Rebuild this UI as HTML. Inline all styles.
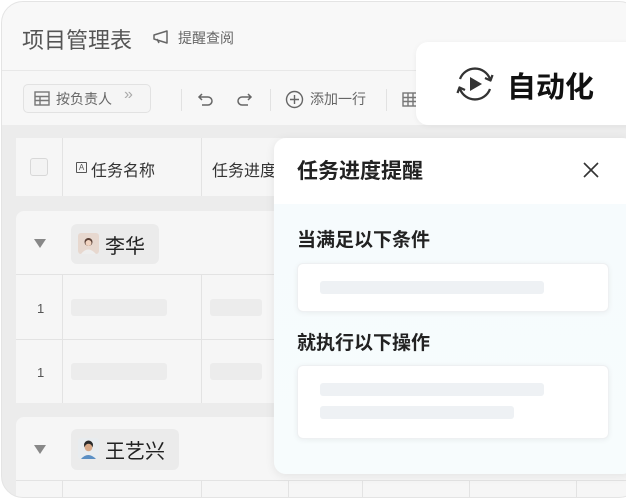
<!DOCTYPE html>
<html><head><meta charset="utf-8"><style>
*{margin:0;padding:0;box-sizing:border-box}
body{width:626px;height:500px;background:#fff;font-family:"Liberation Sans","Noto Sans CJK SC",sans-serif;position:relative;overflow:hidden}
.frame{position:absolute;left:1px;top:1px;width:640px;height:497px;border:1px solid #e4e4e4;border-radius:22px;background:#ececec;overflow:hidden}
.hdr{position:absolute;left:0;top:0;right:0;height:69px;background:#f8f8f8;border-bottom:1px solid #e8e8e8}
.tb{position:absolute;left:0;top:69px;right:0;height:54px;background:#f7f7f7}
.abs{position:absolute}
.t{position:absolute;white-space:nowrap}
.tbl{position:absolute;left:14px;right:0;background:#f6f6f6}
.vl{position:absolute;top:0;bottom:0;width:1px;background:#e3e3e3}
.hl{position:absolute;left:0;right:0;height:1px;background:#e3e3e3}
.sk{position:absolute;height:17px;background:#ececec;border-radius:3px}
.chip{position:absolute;background:#ebebeb;border-radius:6px}
.panel{position:absolute;left:274px;top:138px;width:360px;height:336px;border-radius:12px;background:linear-gradient(#fff 0,#fff 66px,#f6fbfd 66px,#f7fcfd 100%);box-shadow:0 2px 10px rgba(0,0,0,.08)}
.box{position:absolute;left:23px;width:312px;background:#fff;border-radius:6px;box-shadow:0 1px 6px rgba(0,0,0,.06);border:1px solid #eef0f2}
.bar{position:absolute;left:23px;height:13px;background:#eef1f4;border-radius:3px}
.tri{position:absolute;width:0;height:0;border-left:6px solid transparent;border-right:6px solid transparent;border-top:9px solid #888}
</style></head><body>
<div class="frame">
 <div class="hdr">
  <div class="t" style="left:20px;top:21px;font-size:22px;color:#555">项目管理表</div>
  <svg class="abs" style="left:150px;top:27px" width="18" height="16" viewBox="0 0 18 16"><path d="M2 6 L15 2 V14 L2 10 Z M5 10 L7 14" fill="none" stroke="#666" stroke-width="1.5" stroke-linejoin="round"/></svg>
  <div class="t" style="left:176px;top:26px;font-size:14px;color:#666">提醒查阅</div>
 </div>
 <div class="tb">
  <div class="abs" style="left:21px;top:13px;width:128px;height:29px;border:1px solid #e2e2e2;border-radius:5px;background:#f5f5f5"></div>
  <svg class="abs" style="left:32px;top:20px" width="16" height="15" viewBox="0 0 16 15"><rect x="1" y="1" width="14" height="13" fill="none" stroke="#777" stroke-width="1.4"/><path d="M1 5.5H15M1 9.5H15M6 5.5V14" stroke="#777" stroke-width="1.4"/></svg>
  <div class="t" style="left:54px;top:18px;font-size:14px;color:#666">按负责人</div>
  <div class="t" style="left:122px;top:15px;font-size:16px;color:#aaa">»</div>
  <div class="abs" style="left:179px;top:18px;width:1px;height:22px;background:#e2e2e2"></div>
  <svg class="abs" style="left:195px;top:20px" width="18" height="16" viewBox="0 0 18 16"><path d="M5 3 L2 6 L5 9 M2 6 H11 A4 4 0 0 1 11 14 H5" fill="none" stroke="#666" stroke-width="1.5"/></svg>
  <svg class="abs" style="left:233px;top:20px" width="18" height="16" viewBox="0 0 18 16"><path d="M13 3 L16 6 L13 9 M16 6 H7 A4 4 0 0 0 7 14 H13" fill="none" stroke="#666" stroke-width="1.5"/></svg>
  <div class="abs" style="left:268px;top:18px;width:1px;height:22px;background:#e2e2e2"></div>
  <svg class="abs" style="left:283px;top:19px" width="19" height="19" viewBox="0 0 19 19"><circle cx="9.5" cy="9.5" r="8" fill="none" stroke="#666" stroke-width="1.4"/><path d="M9.5 5V14M5 9.5H14" stroke="#666" stroke-width="1.4"/></svg>
  <div class="t" style="left:308px;top:18px;font-size:14px;color:#666">添加一行</div>
  <div class="abs" style="left:384px;top:18px;width:1px;height:22px;background:#e2e2e2"></div>
  <svg class="abs" style="left:400px;top:21px" width="16" height="15" viewBox="0 0 16 15"><rect x="1" y="1" width="14" height="13" fill="none" stroke="#777" stroke-width="1.4"/><path d="M1 5.5H15M1 9.5H15M6 1V14M11 1V14" stroke="#777" stroke-width="1.4"/></svg>
 </div>
 <div class="tbl" style="top:136px;height:58px">
  <div class="abs" style="left:14px;top:20px;width:18px;height:18px;border:1px solid #d8d8d8;border-radius:3px;background:#f3f3f3"></div>
  <div class="vl" style="left:46px"></div><div class="vl" style="left:185px"></div><div class="vl" style="left:272px"></div>
  <div class="abs" style="left:60px;top:24px;width:11px;height:11px;border:1px solid #555;border-radius:1px;font-size:8px;line-height:9px;text-align:center;color:#555">A</div>
  <div class="t" style="left:75px;top:19px;font-size:16px;color:#333">任务名称</div>
  <div class="t" style="left:196px;top:19px;font-size:16px;color:#333">任务进度</div>
 </div>
 <div class="tbl" style="top:209px;height:192px;border-radius:8px 0 0 0">
  <div class="tri" style="left:18px;top:28px"></div>
  <div class="chip" style="left:55px;top:13px;width:88px;height:40px"></div>
  <div class="abs" style="left:62px;top:22px;width:21px;height:21px;border-radius:3px;background:#e7d8cf"><svg width="21" height="21"><circle cx="10.5" cy="9" r="4" fill="#5a4036"/><circle cx="10.5" cy="10" r="3" fill="#f1d3c0"/><path d="M3 21 Q10 12 18 21Z" fill="#eee"/></svg></div>
  <div class="t" style="left:89px;top:19px;font-size:20px;color:#222">李华</div>
  <div class="hl" style="top:63px"></div>
  <div class="hl" style="top:128px"></div>
  <div class="vl" style="left:46px;top:63px"></div><div class="vl" style="left:185px;top:63px"></div><div class="vl" style="left:272px;top:63px"></div>
  <div class="t" style="left:21px;top:90px;font-size:13px;color:#555">1</div>
  <div class="t" style="left:21px;top:154px;font-size:13px;color:#555">1</div>
  <div class="sk" style="left:55px;top:88px;width:96px"></div>
  <div class="sk" style="left:194px;top:88px;width:52px"></div>
  <div class="sk" style="left:55px;top:152px;width:96px"></div>
  <div class="sk" style="left:194px;top:152px;width:52px"></div>
 </div>
 <div class="tbl" style="top:415px;height:90px;border-radius:8px 0 0 0">
  <div class="tri" style="left:18px;top:28px"></div>
  <div class="chip" style="left:55px;top:12px;width:108px;height:41px"></div>
  <div class="abs" style="left:62px;top:21px;width:21px;height:21px;border-radius:3px;background:#e8ecef"><svg width="21" height="21"><circle cx="10.5" cy="7" r="4.5" fill="#2a2a2a"/><circle cx="10.5" cy="9.5" r="3.8" fill="#d7a887"/><path d="M3 21 Q10 13 18 21Z" fill="#5b8fc4"/></svg></div>
  <div class="t" style="left:89px;top:18px;font-size:20px;color:#222">王艺兴</div>
  <div class="hl" style="top:63px"></div>
  <div class="vl" style="left:46px;top:63px"></div><div class="vl" style="left:185px;top:63px"></div>
  <div class="vl" style="left:272px;top:63px"></div><div class="vl" style="left:346px;top:63px"></div><div class="vl" style="left:453px;top:63px"></div><div class="vl" style="left:560px;top:63px"></div>
 </div>
</div>
<div class="abs" style="left:416px;top:42px;width:230px;height:83px;background:#fff;border-radius:12px;box-shadow:0 1px 6px rgba(0,0,0,.05)"></div>
<svg class="abs" style="left:455px;top:64px" width="40" height="40" viewBox="0 0 40 40"><path d="M5 15 A16 16 0 0 1 35 15" fill="none" stroke="#333" stroke-width="2.3"/><path d="M30 14 L35.5 16.5 L37.5 11" fill="none" stroke="#333" stroke-width="2.3" stroke-linejoin="round"/><path d="M35 25 A16 16 0 0 1 5 25" fill="none" stroke="#333" stroke-width="2.3"/><path d="M10 26 L4.5 23.5 L2.5 29" fill="none" stroke="#333" stroke-width="2.3" stroke-linejoin="round"/><path d="M15 13 L27 20 L15 27Z" fill="#333"/></svg>
<div class="t" style="left:507px;top:64px;font-size:29px;font-weight:bold;color:#111">自动化</div>
<div class="panel">
 <div class="t" style="left:23px;top:17px;font-size:21px;font-weight:bold;color:#222">任务进度提醒</div>
 <svg class="abs" style="left:308px;top:23px" width="18" height="18" viewBox="0 0 18 18"><path d="M2 2L16 16M16 2L2 16" stroke="#333" stroke-width="1.6"/></svg>
 <div class="t" style="left:23px;top:87px;font-size:19px;font-weight:bold;color:#222">当满足以下条件</div>
 <div class="box" style="top:125px;height:49px"></div>
 <div class="bar" style="left:46px;top:143px;width:224px"></div>
 <div class="t" style="left:23px;top:190px;font-size:19px;font-weight:bold;color:#222">就执行以下操作</div>
 <div class="box" style="top:227px;height:74px"></div>
 <div class="bar" style="left:46px;top:245px;width:224px"></div>
 <div class="bar" style="left:46px;top:268px;width:194px"></div>
</div>
</body></html>
